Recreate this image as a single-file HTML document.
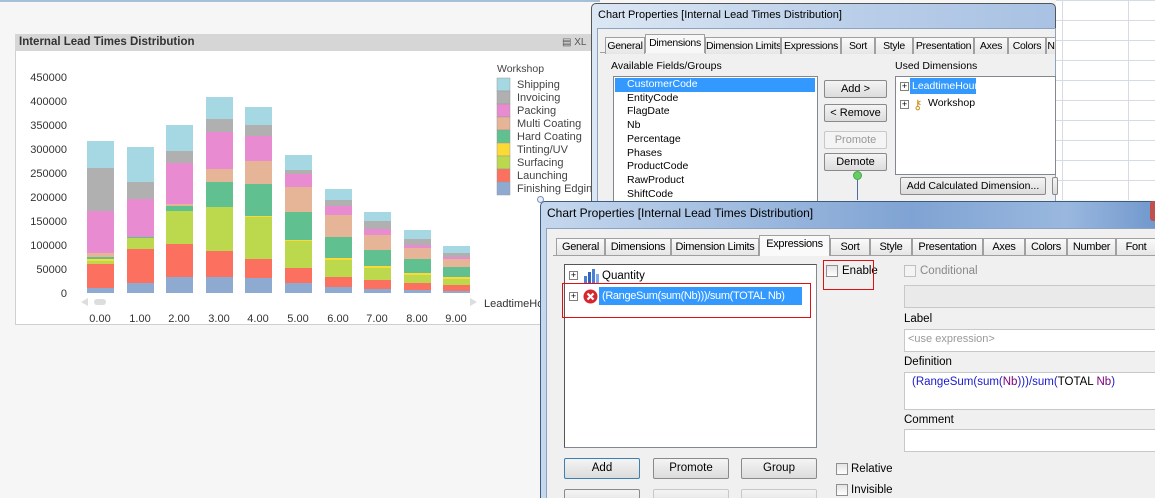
<!DOCTYPE html>
<html style="overflow:hidden;width:1155px;height:498px"><head><style>
*{box-sizing:border-box;margin:0;padding:0}
body{width:1155px;height:498px;overflow:hidden;background:#f6f6f6;font-family:"Liberation Sans",sans-serif;font-size:11px;color:#000;position:relative}
.a{position:absolute;white-space:nowrap}
.btn{position:absolute;border:1px solid #8a8a8a;border-radius:2px;background:linear-gradient(#f4f4f4,#dcdcdc);text-align:center;font-size:11px;white-space:nowrap}
.tab{position:absolute;border:1px solid #a0a0a0;border-bottom:none;background:linear-gradient(#fafafa,#e6e6e6);text-align:center;font-size:10.5px;letter-spacing:-0.3px;line-height:16px;height:17px;white-space:nowrap;overflow:hidden}
.cb{position:absolute;width:12px;height:12px;border:1px solid #8f8f8f;background:linear-gradient(#e4e4e4,#fff)}
.pl{position:absolute;width:9px;height:9px;border:1px solid #808080;background:#fff;font-size:9px;line-height:7px;text-align:center}
</style></head><body>
<div class="a" style="left:0;top:0;width:600px;height:2px;background:#a8bfd8"></div>
<div class="a" style="left:15px;top:34px;width:580px;height:291px;background:#fff;border:1px solid #d0d0d0"></div>
<div class="a" style="left:15px;top:34px;width:580px;height:17px;background:#d6d6d6"></div>
<div class="a" style="left:19px;top:36px;font-weight:bold;font-size:11.5px;color:#333">Internal Lead Times Distribution</div>
<div class="a" style="left:562px;top:37px;font-size:10px;color:#555">▤ XL</div>
<svg class="a" style="left:0;top:0" width="600" height="330">
<g font-family="Liberation Sans" font-size="11" fill="#333" text-anchor="end">
<text x="67" y="81">450000</text><text x="67" y="105">400000</text><text x="67" y="129">350000</text><text x="67" y="153">300000</text><text x="67" y="177">250000</text><text x="67" y="201">200000</text><text x="67" y="225">150000</text><text x="67" y="249">100000</text><text x="67" y="273">50000</text><text x="67" y="297">0</text>
</g>
<g id="bars"></g>
<g font-family="Liberation Sans" font-size="11" fill="#333" text-anchor="middle">
<text x="100" y="322">0.00</text><text x="140" y="322">1.00</text><text x="179" y="322">2.00</text><text x="219" y="322">3.00</text><text x="258" y="322">4.00</text><text x="298" y="322">5.00</text><text x="338" y="322">6.00</text><text x="377" y="322">7.00</text><text x="417" y="322">8.00</text><text x="456" y="322">9.00</text>
</g>
<polygon points="81,302 88,298 88,306" fill="#ddd"/>
<rect x="94" y="299" width="12" height="6" rx="3" fill="#ddd"/>
<polygon points="477,302 470,298 470,306" fill="#ddd"/>
<text x="484" y="307" font-family="Liberation Sans" font-size="11" fill="#333">LeadtimeHour</text>
<text x="497" y="72" font-family="Liberation Sans" font-size="10.5" fill="#444">Workshop</text>
<g stroke="#999" stroke-width="0.5">
<rect x="497" y="78" width="13" height="13" fill="#a6d8e3"/><rect x="497" y="91" width="13" height="13" fill="#b0b0b0"/><rect x="497" y="104" width="13" height="13" fill="#e88bd0"/><rect x="497" y="117" width="13" height="13" fill="#e6b496"/><rect x="497" y="130" width="13" height="13" fill="#60c090"/><rect x="497" y="143" width="13" height="13" fill="#fcd934"/><rect x="497" y="156" width="13" height="13" fill="#bcd84c"/><rect x="497" y="169" width="13" height="13" fill="#fc7060"/><rect x="497" y="182" width="13" height="13" fill="#8eaad0"/>
</g>
<g font-family="Liberation Sans" font-size="11" fill="#444">
<text x="517" y="88">Shipping</text><text x="517" y="101">Invoicing</text><text x="517" y="114">Packing</text><text x="517" y="127">Multi Coating</text><text x="517" y="140">Hard Coating</text><text x="517" y="153">Tinting/UV</text><text x="517" y="166">Surfacing</text><text x="517" y="179">Launching</text><text x="517" y="192">Finishing Edging</text>
</g>
</svg>
<div class="a" style="left:1056px;top:0;width:99px;height:200px;background:#fff;background-image:linear-gradient(#d5dce6 1px,transparent 1px),linear-gradient(90deg,#d5dce6 1px,transparent 1px);background-size:66px 20px;background-position:6px 0"></div>
<!-- dialog 1 -->
<div class="a" style="left:591px;top:3px;width:465px;height:200px;background:linear-gradient(90deg,#dce7f4,#b8cde8 60%,#a9c2e3);border:1px solid #555;border-radius:5px 5px 0 0"></div>
<div class="a" style="left:598px;top:9px;font-size:11px">Chart Properties [Internal Lead Times Distribution]</div>
<div class="a" style="left:597px;top:28px;width:459px;height:175px;background:#f0f0f0;border:1px solid #8da2bd"></div>
<div class="a" style="left:600px;top:52px;width:456px;height:1px;background:#a0a0a0"></div>
<div class="tab" style="left:605px;top:37px;width:40px">General</div>
<div class="tab" style="left:645px;top:34px;width:60px;height:19px;background:#f8f8f8">Dimensions</div>
<div class="tab" style="left:705px;top:37px;width:76px">Dimension Limits</div>
<div class="tab" style="left:781px;top:37px;width:60px">Expressions</div>
<div class="tab" style="left:841px;top:37px;width:34px">Sort</div>
<div class="tab" style="left:875px;top:37px;width:38px">Style</div>
<div class="tab" style="left:913px;top:37px;width:61px">Presentation</div>
<div class="tab" style="left:974px;top:37px;width:34px">Axes</div>
<div class="tab" style="left:1008px;top:37px;width:38px">Colors</div>
<div class="tab" style="left:1046px;top:37px;width:10px">N</div>
<div class="a" style="left:611px;top:60px;font-size:10.5px">Available Fields/Groups</div>
<div class="a" style="left:895px;top:60px;font-size:10.5px">Used Dimensions</div>
<div class="a" style="left:613px;top:76px;width:205px;height:130px;background:#fff;border:1px solid #828790"></div>
<div class="a" style="left:615px;top:78px;width:200px;height:14px;background:#3399ff"></div>
<div class="a" style="left:627px;top:78px;line-height:13.7px;color:#000;font-size:10.5px"><span style="color:#fff">CustomerCode</span><br>EntityCode<br>FlagDate<br>Nb<br>Percentage<br>Phases<br>ProductCode<br>RawProduct<br>ShiftCode</div>
<div class="btn" style="left:824px;top:80px;width:63px;height:18px;line-height:16px">Add &gt;</div>
<div class="btn" style="left:824px;top:104px;width:63px;height:18px;line-height:16px">&lt; Remove</div>
<div class="btn" style="left:824px;top:131px;width:63px;height:18px;line-height:16px;color:#999;border-color:#c8c8c8;background:#f4f4f4">Promote</div>
<div class="btn" style="left:824px;top:153px;width:63px;height:18px;line-height:16px">Demote</div>
<div class="a" style="left:857px;top:176px;width:1px;height:24px;background:#4a6e9e"></div>
<div class="a" style="left:853px;top:171px;width:9px;height:9px;border-radius:50%;background:#6c6;border:1px solid #4a4"></div>
<div class="a" style="left:895px;top:76px;width:161px;height:99px;background:#fff;border:1px solid #828790"></div>
<div class="pl" style="left:900px;top:82px">+</div>
<div class="a" style="left:910px;top:78px;width:66px;height:16px;background:#3399ff;color:#fff;padding-left:2px;line-height:16px;font-size:10.5px;overflow:hidden">LeadtimeHour</div>
<div class="pl" style="left:900px;top:100px">+</div>
<div class="a" style="left:913px;top:97px;color:#c9901c;font-size:13px">⚷</div>
<div class="a" style="left:928px;top:97px;font-size:10.5px">Workshop</div>
<div class="btn" style="left:900px;top:177px;width:146px;height:18px;line-height:16px;font-size:10.5px">Add Calculated Dimension...</div>
<div class="btn" style="left:1052px;top:177px;width:6px;height:18px"></div>
<!-- dialog 2 -->
<div class="a" style="left:540px;top:201px;width:620px;height:300px;background:linear-gradient(90deg,#c6d8ee,#7fa3d3 60%,#9ab8df 85%,#6f97cc);border:1px solid #3d5a80;border-radius:5px 5px 0 0"></div>
<div class="a" style="left:537px;top:196px;width:7px;height:7px;border-radius:50%;background:#eef;border:1px solid #7894b8"></div>
<div class="a" style="left:547px;top:206px;font-size:12px">Chart Properties [Internal Lead Times Distribution]</div>
<div class="a" style="left:1150px;top:201px;width:8px;height:20px;background:#c0504d;border-radius:3px"></div>
<div class="a" style="left:546px;top:228px;width:612px;height:272px;background:#f0f0f0;border:1px solid #8da2bd"></div>
<div class="a" style="left:553px;top:255px;width:602px;height:1px;background:#a0a0a0"></div>
<div class="tab" style="left:556px;top:238px;width:49px;font-size:11px">General</div>
<div class="tab" style="left:605px;top:238px;width:66px;font-size:11px">Dimensions</div>
<div class="tab" style="left:671px;top:238px;width:88px;font-size:11px">Dimension Limits</div>
<div class="tab" style="left:759px;top:235px;width:71px;height:21px;background:#fafafa;font-size:11px">Expressions</div>
<div class="tab" style="left:830px;top:238px;width:40px;font-size:11px">Sort</div>
<div class="tab" style="left:870px;top:238px;width:42px;font-size:11px">Style</div>
<div class="tab" style="left:912px;top:238px;width:71px;font-size:11px">Presentation</div>
<div class="tab" style="left:983px;top:238px;width:42px;font-size:11px">Axes</div>
<div class="tab" style="left:1025px;top:238px;width:42px;font-size:11px">Colors</div>
<div class="tab" style="left:1067px;top:238px;width:49px;font-size:11px">Number</div>
<div class="tab" style="left:1116px;top:238px;width:40px;font-size:11px">Font</div>
<div class="a" style="left:564px;top:264px;width:253px;height:184px;background:#fff;border:1px solid #828790;border-left-color:#555;border-top-color:#555"></div>
<div class="pl" style="left:569px;top:271px">+</div>
<svg class="a" style="left:583px;top:269px" width="16" height="14"><rect x="1" y="7" width="3" height="7" fill="#4a7fd8"/><rect x="5" y="3" width="3" height="11" fill="#2f63c4"/><rect x="9" y="0" width="3" height="14" fill="#4a7fd8"/><rect x="13" y="5" width="3" height="9" fill="#7fa8e8"/></svg>
<div class="a" style="left:602px;top:270px;font-size:11.5px">Quantity</div>
<div class="pl" style="left:569px;top:292px">+</div>
<svg class="a" style="left:583px;top:289px" width="15" height="15"><circle cx="7.5" cy="7.5" r="7" fill="#d8262e"/><path d="M4.5 4.5L10.5 10.5M10.5 4.5L4.5 10.5" stroke="#fff" stroke-width="2.2"/></svg>
<div class="a" style="left:599px;top:287px;width:203px;height:18px;background:#3399ff;color:#fff;line-height:18px;padding-left:3px;font-size:11px;letter-spacing:-0.35px;overflow:hidden">(RangeSum(sum(Nb)))/sum(TOTAL Nb)</div>
<div class="a" style="left:562px;top:283px;width:249px;height:35px;border:1.5px solid #e01010"></div>
<div class="cb" style="left:826px;top:265px"></div>
<div class="a" style="left:842px;top:265px;font-size:11.5px">Enable</div>
<div class="a" style="left:823px;top:260px;width:51px;height:30px;border:1.5px solid #e01010"></div>
<div class="cb" style="left:904px;top:265px;border-color:#c0c0c0;background:#f4f4f4"></div>
<div class="a" style="left:920px;top:265px;color:#888;font-size:11.5px">Conditional</div>
<div class="a" style="left:904px;top:285px;width:260px;height:23px;background:#eaeaea;border:1px solid #c8c8c8"></div>
<div class="a" style="left:904px;top:313px;font-size:11.5px">Label</div>
<div class="a" style="left:904px;top:329px;width:260px;height:23px;background:#fff;border:1px solid #c8c8c8;color:#999;padding:3px 0 0 3px">&lt;use expression&gt;</div>
<div class="a" style="left:904px;top:356px;font-size:11.5px">Definition</div>
<div class="a" style="left:904px;top:372px;width:260px;height:38px;background:#fff;border:1px solid #c8c8c8;padding:3px 0 0 7px;font-size:11.5px"><span style="color:#1a1acc">(RangeSum(sum(</span><span style="color:#800080">Nb</span><span style="color:#1a1acc">)))/sum(</span><span style="color:#000">TOTAL</span> <span style="color:#800080">Nb</span><span style="color:#1a1acc">)</span></div>
<div class="a" style="left:904px;top:414px;font-size:11.5px">Comment</div>
<div class="a" style="left:904px;top:429px;width:260px;height:23px;background:#fff;border:1px solid #c8c8c8"></div>
<div class="btn" style="left:564px;top:458px;width:76px;height:21px;line-height:19px;border-color:#3c7fb1;font-size:11.5px">Add</div>
<div class="btn" style="left:653px;top:458px;width:76px;height:21px;line-height:19px;font-size:11.5px">Promote</div>
<div class="btn" style="left:741px;top:458px;width:76px;height:21px;line-height:19px;font-size:11.5px">Group</div>
<div class="btn" style="left:564px;top:489px;width:76px;height:21px"></div>
<div class="btn" style="left:653px;top:489px;width:76px;height:21px;border-color:#c8c8c8"></div>
<div class="btn" style="left:741px;top:489px;width:76px;height:21px;border-color:#c8c8c8"></div>
<div class="cb" style="left:836px;top:463px"></div>
<div class="a" style="left:851px;top:463px;font-size:11.5px">Relative</div>
<div class="cb" style="left:836px;top:484px"></div>
<div class="a" style="left:851px;top:484px;font-size:11.5px">Invisible</div>
<script>
var C=['#8eaad0','#fc7060','#bcd84c','#fcd934','#60c090','#e6b496','#e88bd0','#b0b0b0','#a6d8e3'];
var B=[
[293,288,264,261,259,257,253,211,168,141],
[293,283,249,238,238,237,237,199,182,147],
[293,277,244,211,211,206,204,163,151,125],
[293,277,251,207,207,182,169,132,119,97],
[293,278,259,217,216,184,161,136,125,107],
[293,283,268,241,240,212,187,174,170,155],
[293,287,277,260,258,237,215,206,200,189],
[293,289,280,268,266,250,235,229,221,212],
[293,290,283,275,273,259,248,245,239,230],
[293,291,285,279,277,267,259,257,253,246]];
var X=[87,127,166,206,245,285,325,364,404,443],s='';
for(var i=0;i<10;i++)for(var k=0;k<9;k++){var y2=B[i][k],y1=B[i][k+1];if(y2>y1)s+='<rect x="'+X[i]+'" y="'+y1+'" width="27" height="'+(y2-y1)+'" fill="'+C[k]+'"/>';}
document.getElementById('bars').innerHTML=s;
</script>
</body></html>
